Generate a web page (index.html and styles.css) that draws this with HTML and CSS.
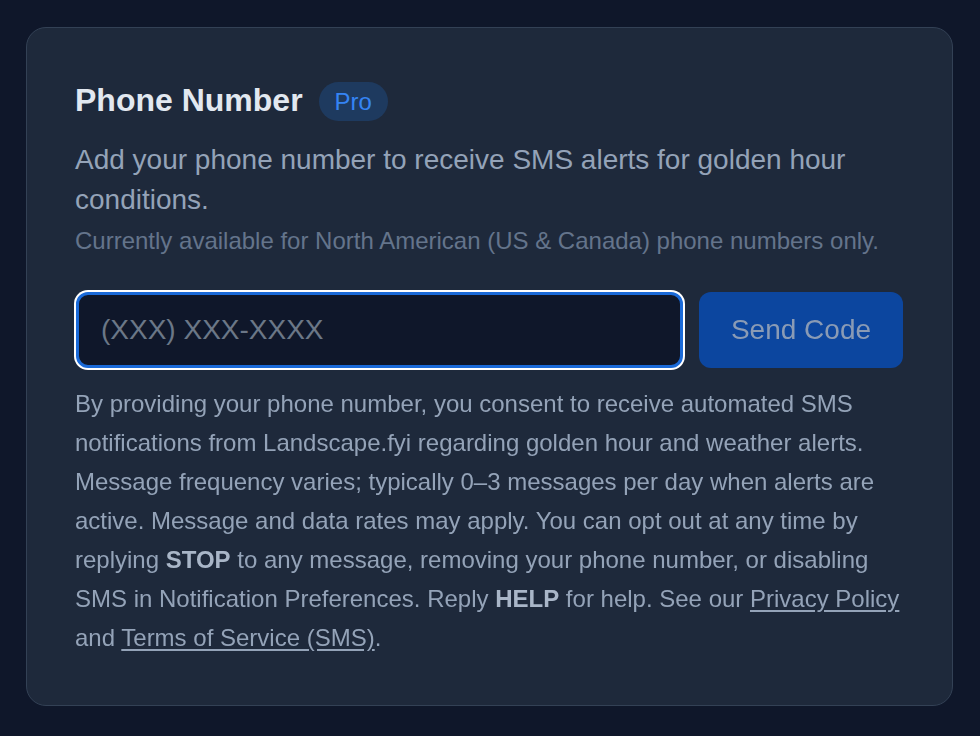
FILE: index.html
```html
<!DOCTYPE html>
<html lang="en">
<head>
<meta charset="utf-8">
<title>Phone Number</title>
<link rel="stylesheet" href="styles.css">
</head>
<body>
<main class="page">
  <section class="card">
    <div class="head">
      <h2 class="title">Phone Number</h2>
      <span class="badge">Pro</span>
    </div>
    <p class="desc">Add your phone number to receive SMS alerts for golden hour conditions.</p>
    <p class="note">Currently available for North American (US &amp; Canada) phone numbers only.</p>
    <div class="row">
      <input class="phone" type="tel" placeholder="(XXX) XXX-XXXX" autofocus>
      <button class="send" type="button">Send Code</button>
    </div>
    <p class="consent">By providing your phone number, you consent to receive automated SMS notifications from Landscape.fyi regarding golden hour and weather alerts. Message frequency varies; typically 0–3 messages per day when alerts are active. Message and data rates may apply. You can opt out at any time by replying <strong>STOP</strong> to any message, removing your phone number, or disabling SMS in Notification Preferences. Reply <strong>HELP</strong> for help. See our <a href="#">Privacy Policy</a> and <a href="#">Terms of Service (SMS)</a>.</p>
  </section>
</main>
</body>
</html>
```

FILE: styles.css
```css
* { box-sizing: border-box; }
html, body { margin: 0; padding: 0; }
body {
  background: #0f172a;
  font-family: "Liberation Sans", Arial, sans-serif;
  color: #94a3b8;
}
.page {
  padding: 27px 27px 0 26px;
}
.card {
  width: 927px;
  height: 679px;
  background: #1e293b;
  border: 1px solid #334155;
  border-radius: 20px;
  padding: 48px 48px 48px 48px;
}
.head {
  display: flex;
  align-items: center;
  gap: 16px;
  height: 48px;
}
.title {
  margin: 0;
  font-size: 32px;
  line-height: 48px;
  font-weight: 700;
  color: #e2e8f0;
}
.badge {
  display: inline-block;
  font-size: 24px;
  line-height: 33px;
  padding: 3px 16px;
  border-radius: 999px;
  background: #1e3a5f;
  color: #3584f4;
  margin-top: 2px;
}
.desc {
  margin: 16px 0 0;
  font-size: 28px;
  line-height: 40px;
  color: #94a3b8;
}
.note {
  margin: 3px 0 0;
  font-size: 24px;
  line-height: 36px;
  color: #64748b;
}
.row {
  display: flex;
  gap: 16px;
  margin: 33px 1px 0 1px;
}
.phone {
  flex: 1;
  min-width: 0;
  height: 76px;
  background: #0f172a;
  border: 3px solid #1a6ad9;
  border-radius: 12px;
  box-shadow: 0 0 0 2px #ffffff;
  padding: 0 22px;
  font-family: "Liberation Sans", Arial, sans-serif;
  font-size: 28px;
  color: #e2e8f0;
  outline: none;
}
.phone::placeholder { color: #6b7787; }
.send {
  width: 204px;
  height: 76px;
  border: none;
  border-radius: 12px;
  background: #0c469f;
  color: #8a9bb5;
  font-family: "Liberation Sans", Arial, sans-serif;
  font-size: 28px;
  padding: 0;
}
.consent {
  margin: 16px 0 0;
  font-size: 24px;
  line-height: 39px;
  color: #94a3b8;
}
.consent strong { color: #a9b6c8; font-weight: 700; }
.consent a { color: #94a3b8; text-decoration: underline; text-underline-offset: 3px; }
```
